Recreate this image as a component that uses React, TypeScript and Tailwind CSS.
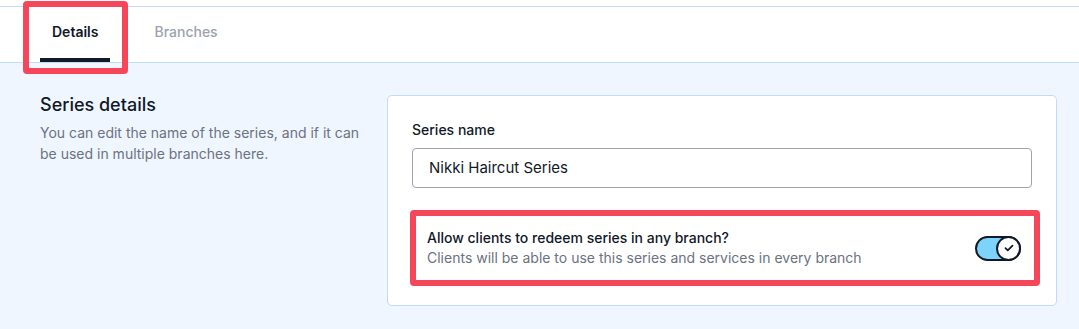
import React from "react";

function Toggle() {
  return (
    <div className="relative h-[25px] w-[46px] rounded-full border-2 border-[#111827] bg-[#7dd3fc]">
      <div className="absolute right-[-2px] top-[-2px] flex h-[25px] w-[25px] items-center justify-center rounded-full border-2 border-[#111827] bg-white">
        <svg width="10" height="8" viewBox="0 0 10 8" fill="none">
          <path d="M1.5 4.2 3.8 6.3 8.5 1.7" stroke="#111827" strokeWidth="1.8" strokeLinecap="round" strokeLinejoin="round" />
        </svg>
      </div>
    </div>
  );
}

export default function App() {
  return (
    <div className="relative h-[329px] w-[1079px] overflow-hidden bg-[#eff6ff] font-['Inter',sans-serif] text-[#111827]">
      <div className="h-[6px] bg-white" />
      <div className="flex h-[57px] gap-8 border-y border-[#bfdbfe] bg-white pl-[40px]">
        <div className="flex flex-col">
          <div className="flex flex-1 items-center px-3 pb-[2px] text-sm font-semibold">Details</div>
          <div className="h-[4px] w-full bg-[#111827]" />
        </div>
        <div className="flex items-center px-3 pb-[5px] text-sm font-medium text-[#9ca3af]">Branches</div>
      </div>

      {/* annotation around the active tab */}
      <div className="absolute left-[23px] top-[1px] h-[73px] w-[105px] rounded-[4px] border-[6px] border-[#f6475a]" />

      <div className="flex justify-between pl-[40px] pr-[22px] pt-[32px]">
        <div className="w-[330px] pt-[-2px]">
          <h2 className="-mt-[2px] text-lg font-medium leading-6">Series details</h2>
          <p className="mt-[5px] text-sm leading-[21px] text-[#6b7280]">
            You can edit the name of the series, and if it can be used in multiple branches here.
          </p>
        </div>

        <div className="w-[670px] rounded-[5px] border border-[#bfdbfe] bg-white pb-[19px] pt-[24px]">
          <div className="px-[24px]">
            <label className="block text-sm font-medium leading-5">Series name</label>
            <div className="mt-[8px] flex h-[40px] items-center rounded-[4px] border border-[#9ca3af] px-4 text-[15px]">
              Nikki Haircut Series
            </div>
          </div>
          <div className="ml-[22px] mt-[22px] flex h-[76px] w-[630px] items-center justify-between rounded-[4px] border-[6px] border-[#f6475a] pl-[11px] pr-[13px]">
            <div>
              <div className="text-sm font-medium leading-5">Allow clients to redeem series in any branch?</div>
              <div className="text-sm leading-5 text-[#6b7280]">
                Clients will be able to use this series and services in every branch
              </div>
            </div>
            <Toggle />
          </div>
        </div>
      </div>
    </div>
  );
}
